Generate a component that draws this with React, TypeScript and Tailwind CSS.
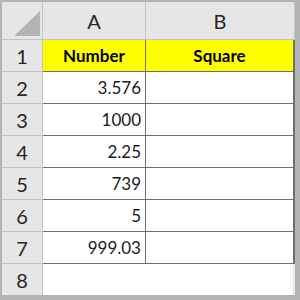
import { Fragment } from 'react';

const rows: { n: number; value: string }[] = [
  { n: 2, value: '3.576' },
  { n: 3, value: '1000' },
  { n: 4, value: '2.25' },
  { n: 5, value: '739' },
  { n: 6, value: '5' },
  { n: 7, value: '999.03' },
];

const font = { fontFamily: 'Lato, "Open Sans", sans-serif' };

function RowHead({ n }: { n: number }) {
  return (
    <div className="flex items-center justify-center bg-[#e6e6e6] border-r border-b border-[#c4c4c4] text-[20px] text-[#262626]">
      {n}
    </div>
  );
}

export default function App() {
  return (
    <div className="w-[300px] h-[300px] bg-[#b4b4b4] pt-[2px] pl-[2px] pr-[5px] pb-[5px]" style={font}>
      <div className="grid h-full w-full bg-white grid-cols-[41px_103px_149px] grid-rows-[38px_repeat(7,32px)_1fr]">
        {/* header row */}
        <div className="flex items-end justify-end pr-[2px] pb-[3px] bg-[#e6e6e6] border-r border-b border-[#c4c4c4]">
          <svg width="26" height="25" viewBox="0 0 26 25">
            <polygon points="0,25 26,25 26,0" fill="#b4b4b4" />
          </svg>
        </div>
        <div className="flex items-center justify-center bg-[#e6e6e6] border-r border-b border-[#c4c4c4] text-[20px] text-[#262626]">
          A
        </div>
        <div className="flex items-center justify-center bg-[#e6e6e6] border-r border-b border-[#c4c4c4] text-[20px] text-[#262626]">
          B
        </div>

        {/* row 1 */}
        <RowHead n={1} />
        <div className="flex items-center justify-center bg-[#ffff00] border-r border-b border-[#6f6f6f] text-[17px] font-bold text-black">
          Number
        </div>
        <div className="flex items-center justify-center bg-[#ffff00] border-r-2 border-b border-[#6f6f6f] text-[17px] font-bold text-black">
          Square
        </div>

        {rows.map((r) => (
          <Fragment key={r.n}>
            <RowHead n={r.n} />
            <div className="flex items-center justify-end pr-[4px] border-r border-b border-[#6f6f6f] text-[17px] text-[#1a1a1a]">
              {r.value}
            </div>
            <div className="border-r-2 border-b border-[#6f6f6f]" />
          </Fragment>
        ))}

        {/* row 8 */}
        <div className="flex items-center justify-center bg-[#e6e6e6] border-r border-[#c4c4c4] text-[20px] text-[#262626]">
          8
        </div>
        <div />
        <div className="border-r-2 border-[#e8e8e8]" />
      </div>
    </div>
  );
}
